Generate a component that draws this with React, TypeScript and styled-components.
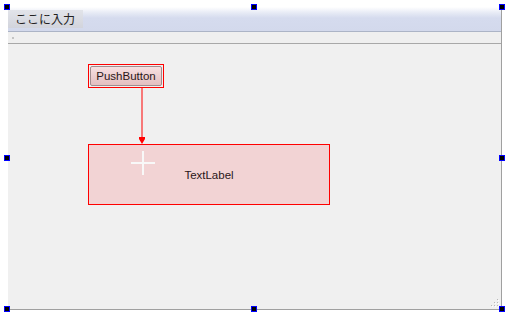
import React from 'react';
import styled, { createGlobalStyle } from 'styled-components';

const GlobalStyle = createGlobalStyle`
    html, body {
        margin: 0;
        padding: 0;
        background: #ffffff;
    }
    body {
        font-family: "Liberation Sans", Arial, sans-serif;
    }
`;

const handles = [
    { x: 4, y: 4 }, { x: 251, y: 4 }, { x: 499, y: 4 },
    { x: 4, y: 155 }, { x: 499, y: 155 },
    { x: 4, y: 306 }, { x: 251, y: 306 }, { x: 499, y: 306 },
];

const App = () => {
    return (
        <Page>
            <GlobalStyle />
            <FormWindow>
                <MenuBar>
                    <MenuItem>ここに入力</MenuItem>
                </MenuBar>
                <ToolStrip>
                    <ToolDot />
                </ToolStrip>
                <Canvas>
                    <Connection width="20" height="60" viewBox="0 0 20 60">
                        <line x1="10" y1="0" x2="10" y2="52" stroke="#ff0000" strokeWidth="1" />
                        <path d="M7 49 H13 V51 L10 56 L7 51 Z" fill="#ff0000" />
                    </Connection>
                    <WidgetFrame left={80} top={20} width={76} height={24} padding={1}>
                        <PushButton>PushButton</PushButton>
                    </WidgetFrame>
                    <WidgetFrame left={80} top={100} width={242} height={61} fill="#f2d3d4">
                        <Crosshair width="26" height="26" viewBox="0 0 26 26">
                            <line x1="13" y1="1" x2="13" y2="25" stroke="#f8f8f8" strokeWidth="2" />
                            <line x1="1" y1="13" x2="25" y2="13" stroke="#f8f8f8" strokeWidth="2" />
                        </Crosshair>
                        <LabelText>TextLabel</LabelText>
                    </WidgetFrame>
                    <SizeGrip width="10" height="10" viewBox="0 0 10 10">
                        {[[7, 1], [7, 4], [4, 4], [7, 7], [4, 7], [1, 7]].map(([x, y]) => (
                            <g key={`${x}-${y}`}>
                                <rect x={x + 1} y={y + 1} width="1" height="1" fill="#ffffff" />
                                <rect x={x} y={y} width="1" height="1" fill="#b8b8b8" />
                            </g>
                        ))}
                    </SizeGrip>
                </Canvas>
            </FormWindow>
            {handles.map(h => (
                <Handle key={`${h.x}-${h.y}`} style={{ left: h.x, top: h.y }} />
            ))}
        </Page>
    );
};

const Page = styled.div`
    position: relative;
    width: 520px;
    height: 328px;
    padding: 7px 0 0 8px;
    box-sizing: border-box;
    overflow: hidden;
`;

const FormWindow = styled.div`
    width: 494px;
    height: 303px;
    box-sizing: border-box;
    border-right: 1px solid #a0a0a0;
    border-bottom: 1px solid #a0a0a0;
    display: flex;
    flex-direction: column;
`;

const MenuBar = styled.div`
    height: 25px;
    box-sizing: border-box;
    border-bottom: 1px solid #acb4c6;
    background: linear-gradient(to bottom, #ffffff 0px, #e6eaf5 6px, #d5dbee 11px, #d3d9ec 24px);
    display: flex;
    align-items: flex-start;
    padding-top: 3px;
`;

const MenuItem = styled.div`
    width: 75px;
    height: 18px;
    box-sizing: border-box;
    padding-left: 7px;
    background: linear-gradient(to bottom, #e2e4ea, #d2d4dc);
    color: #222222;
    font-family: "Noto Sans CJK JP", sans-serif;
    font-size: 12px;
    line-height: 18px;
`;

const ToolStrip = styled.div`
    height: 12px;
    box-sizing: border-box;
    border-bottom: 1px solid #a8a8a8;
    background: #efefef;
    display: flex;
    align-items: center;
    padding-left: 4px;
`;

const ToolDot = styled.div`
    width: 2px;
    height: 2px;
    background: #c4c4c4;
`;

const Canvas = styled.div`
    position: relative;
    flex: 1;
    background: #f0f0f0;
`;

const WidgetFrame = styled.div<{ left: number; top: number; width: number; height: number; fill?: string; padding?: number }>`
    position: absolute;
    left: ${p => p.left}px;
    top: ${p => p.top}px;
    width: ${p => p.width}px;
    height: ${p => p.height}px;
    box-sizing: border-box;
    border: 1px solid #ff0000;
    background: ${p => p.fill || 'transparent'};
    padding: ${p => p.padding || 0}px;
    display: flex;
    align-items: center;
    justify-content: center;
`;

const PushButton = styled.div`
    width: 100%;
    height: 100%;
    box-sizing: border-box;
    border: 1px solid #a08c8e;
    border-radius: 2px;
    background: linear-gradient(to bottom, #f7e0e1, #ebcbcd 60%, #e4c0c2);
    color: #2a1618;
    font-size: 11.5px;
    display: flex;
    align-items: center;
    justify-content: center;
`;

const LabelText = styled.span`
    color: #2a1618;
    font-size: 11.5px;
    margin-top: 1px;
`;

const Crosshair = styled.svg`
    position: absolute;
    left: 41px;
    top: 5px;
`;

const Connection = styled.svg`
    position: absolute;
    left: 124px;
    top: 44px;
    width: 20px;
    height: 60px;
`;

const SizeGrip = styled.svg`
    position: absolute;
    right: 1px;
    bottom: 1px;
`;

const Handle = styled.div`
    position: absolute;
    width: 6px;
    height: 6px;
    box-sizing: border-box;
    border: 1px solid #0000ff;
    background: #000000;
`;

export default App;
